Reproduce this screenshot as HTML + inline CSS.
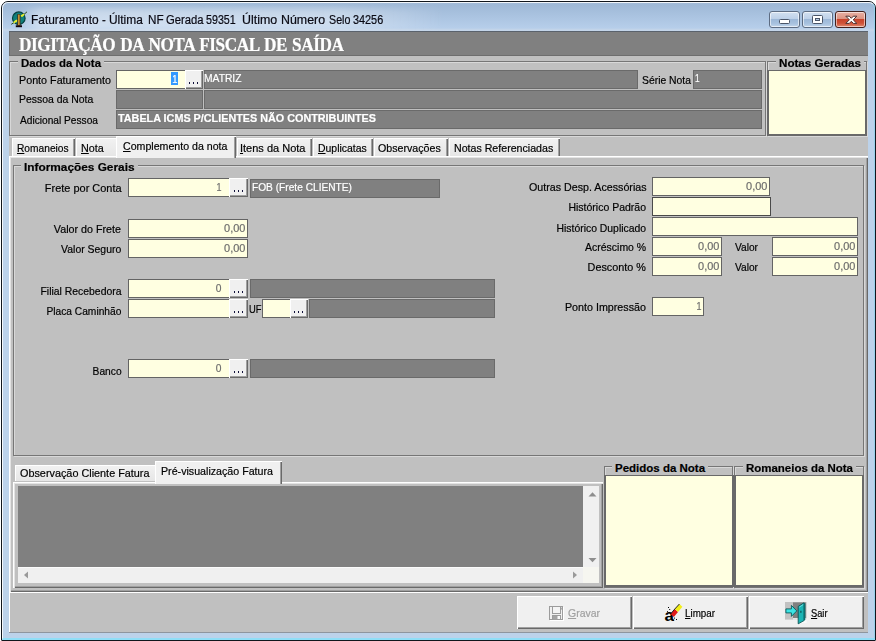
<!DOCTYPE html>
<html lang="pt-BR"><head><meta charset="utf-8"><title>Faturamento</title>
<style>
html,body{margin:0;padding:0}
body{width:876px;height:641px;background:#fff;position:relative;overflow:hidden;font-family:"Liberation Sans",sans-serif;font-size:12px;line-height:14px}
.a{position:absolute;box-sizing:content-box}
.t{position:absolute;white-space:nowrap;line-height:14px;height:14px;-webkit-text-stroke:0.2px currentColor}
.win{left:1px;top:1px;width:873px;height:638px;border:1px solid #11161c;border-radius:7px 7px 1px 1px;
 background:linear-gradient(#a3bcd9 0px,#9fb9d7 3px,#b6ceea 26px,#c6d6e9 28px,#bcd2ea 30px,#bcd2ea 100%)}
.glow{left:20px;top:8px;width:425px;height:22px;background:linear-gradient(90deg,rgba(255,255,255,0) 0,rgba(255,255,255,.40) 5%,rgba(255,255,255,.36) 75%,rgba(255,255,255,0) 100%);filter:blur(3px)}
.win2{left:2px;top:2px;width:871px;height:635px;border:1px solid rgba(255,255,255,.85);border-bottom-width:2px;border-radius:6px 6px 0 0;border-bottom-color:#8fdef7;border-right-color:#98d2ea}
.client{left:9px;top:31px;width:859px;height:601px;background:#c0c0c0}
u{text-decoration:underline;text-underline-offset:1px;text-decoration-thickness:1px}
</style></head>
<body>
<div class="a win"></div>
<div class="a glow"></div>
<div class="a win2"></div>
<div class="a client"></div>
<div class="a " style="left:9px;top:632px;width:859px;height:1px;background:#8e959e"></div>
<svg class="a" style="left:11px;top:11px" width="17" height="17" viewBox="0 0 17 17">
<circle cx="7.8" cy="7.2" r="6.3" fill="#0f7f7b" stroke="#06403f" stroke-width="1.2"/>
<path d="M0.3 13.3 L3 11.6 M13 3.4 L16 0.800" stroke="#2a4a18" stroke-width="1" fill="none"/>
<path d="M2.600 11.800 L6.200 9.200 M10 5.200 L13.200 3.200" stroke="#e4ee30" stroke-width="1.800" fill="none"/>
<path d="M3.600 9.600 l2.200 -0.200 l-0.400 2 z M10.400 4 l2.400 0.200 l-1.400 1.800 z" fill="#e4ee30"/>
<rect x="6.400" y="3.200" width="3" height="11.600" fill="#4a1c08"/>
<rect x="7.300" y="3.600" width="1.200" height="11" fill="#f4c848"/>
<rect x="4.800" y="14.300" width="6.200" height="1.900" fill="#12050a"/>
</svg>
<div class="t" style="left:30.60px;top:8.67px;font-size:0;line-height:22px;height:22px;color:#0a0a14"><span style="display:inline-block;font-size:12.5px;width:71.20px;transform:scaleX(0.9538);transform-origin:0 50%">Faturamento</span> <span style="display:inline-block;font-size:12.5px;width:7.60px;transform:scaleX(0.9109);transform-origin:0 50%">-</span> <span style="display:inline-block;font-size:12.5px;width:38.30px;transform:scaleX(0.9542);transform-origin:0 50%">Última</span> <span style="display:inline-block;font-size:12.5px;width:18.10px;transform:scaleX(0.9357);transform-origin:0 50%">NF</span> <span style="display:inline-block;font-size:12.5px;width:39.80px;transform:scaleX(0.8992);transform-origin:0 50%">Gerada</span> <span style="display:inline-block;font-size:12.5px;width:36.30px;transform:scaleX(0.8543);transform-origin:0 50%">59351</span> <span style="display:inline-block;font-size:12.5px;width:39.00px;transform:scaleX(0.9937);transform-origin:0 50%">Último</span> <span style="display:inline-block;font-size:12.5px;width:47.80px;transform:scaleX(0.9917);transform-origin:0 50%">Número</span> <span style="display:inline-block;font-size:12.5px;width:23.90px;transform:scaleX(0.8549);transform-origin:0 50%">Selo</span> <span style="display:inline-block;font-size:12.5px;width:30.20px;transform:scaleX(0.8687);transform-origin:0 50%">34256</span></div>
<div class="a " style="left:769px;top:11px;width:29px;height:15px;background:linear-gradient(#d2e0f0 0%,#bdd0e8 47%,#9db8d8 50%,#a8c2df 78%,#c4d7ec 100%);border:1px solid #5d6c82;box-shadow:inset 0 0 0 1px rgba(255,255,255,.6);border-radius:3px"></div>
<div class="a " style="left:802px;top:11px;width:29px;height:15px;background:linear-gradient(#d2e0f0 0%,#bdd0e8 47%,#9db8d8 50%,#a8c2df 78%,#c4d7ec 100%);border:1px solid #5d6c82;box-shadow:inset 0 0 0 1px rgba(255,255,255,.6);border-radius:3px"></div>
<div class="a " style="left:835px;top:11px;width:29px;height:15px;background:linear-gradient(#e8b0a4 0%,#dc9483 45%,#c8442c 50%,#cf5238 75%,#e08a70 100%);border:1px solid #43201c;box-shadow:inset 0 0 0 1px rgba(255,255,255,.55);border-radius:3px"></div>
<svg class="a" style="left:769px;top:11px" width="97" height="17" viewBox="0 0 97 17"><rect x="10.500" y="8.500" width="10" height="4" rx="1" fill="#fff" stroke="#4a5568" stroke-width="1"/><rect x="43.500" y="4.500" width="10" height="8" rx="1" fill="#fff" stroke="#4a5568" stroke-width="1"/><rect x="46.500" y="7.500" width="4" height="2" fill="#b6cae3" stroke="#4a5568" stroke-width="1"/><path d="M76.800 5.200 L80.300 5.200 L82.300 7.300 L84.300 5.200 L87.800 5.200 L84.200 8.800 L87.800 12.400 L84.300 12.400 L82.300 10.300 L80.300 12.400 L76.800 12.400 L80.400 8.800 Z" fill="#fff" stroke="#4a3030" stroke-width="1" stroke-linejoin="round"/></svg>
<div class="a " style="left:9px;top:31px;width:859px;height:25px;background:#808080;box-shadow:inset 0 1px 0 #5a626c, inset 1px 0 0 #6c6c6c, inset 0 -1px 0 #6e6e6e"></div>
<span class="t" style="top:33.92px;font-size:18px;color:#fff;line-height:22px;height:22px;font-family:'Liberation Serif', serif;font-weight:bold;left:18.5px;transform-origin:0 50%;transform:scaleX(0.9556);letter-spacing:-0.45px;word-spacing:1.3px;">DIGITAÇÃO DA NOTA FISCAL DE SAÍDA</span>
<div class="a " style="left:10px;top:62px;width:755px;height:73px;border:1px solid #d8d8d8"></div>
<div class="a " style="left:9px;top:61px;width:755px;height:73px;border:1px solid #767676"></div>
<div class="a " style="left:18px;top:57px;width:86px;height:13px;background:#c0c0c0"></div>
<span class="t" style="top:56.02px;font-size:11.5px;color:#000;font-weight:bold;left:21px;transform-origin:0 50%;transform:scaleX(0.9936);">Dados da Nota</span>
<span class="t" style="top:73.02px;font-size:11.5px;color:#000;left:19px;transform-origin:0 50%;transform:scaleX(0.9345);">Ponto Faturamento</span>
<span class="t" style="top:92.02px;font-size:11.5px;color:#000;left:19px;transform-origin:0 50%;transform:scaleX(0.9078);">Pessoa da Nota</span>
<span class="t" style="top:112.52px;font-size:11.5px;color:#000;left:20px;transform-origin:0 50%;transform:scaleX(0.8840);">Adicional Pessoa</span>
<div class="a " style="left:116px;top:70px;width:85px;height:17px;background:#ffffe1;border:1px solid #646464"></div>
<div class="a " style="left:171px;top:72px;width:7px;height:13px;background:#3399ff"></div>
<span class="t" style="top:72.02px;font-size:11.5px;color:#fff;right:698.4px;transform-origin:100% 50%;transform:scaleX(0.8117);">1</span>
<div class="a " style="left:185px;top:70px;width:18px;height:19px;background:#f0f0f0;box-shadow:inset 1px 1px 0 #fff, inset -1px -1px 0 #696969, inset -2px -2px 0 #a0a0a0"></div>
<div class="a " style="left:189px;top:82px;width:1.4px;height:2px;background:#10103a"></div>
<div class="a " style="left:193px;top:82px;width:1.4px;height:2px;background:#10103a"></div>
<div class="a " style="left:197px;top:82px;width:1.4px;height:2px;background:#10103a"></div>
<div class="a " style="left:204px;top:70px;width:432px;height:17px;background:#808080;border:1px solid #6a6a6a"></div>
<span class="t" style="top:71.02px;font-size:11.5px;color:#fff;left:204.3px;transform-origin:0 50%;transform:scaleX(0.8939);">MATRIZ</span>
<span class="t" style="top:72.52px;font-size:11.5px;color:#000;left:642px;transform-origin:0 50%;transform:scaleX(0.9017);">Série Nota</span>
<div class="a " style="left:693px;top:70px;width:67px;height:17px;background:#808080;border:1px solid #6a6a6a"></div>
<span class="t" style="top:71.02px;font-size:11.5px;color:#fff;left:694.8px;transform-origin:0 50%;transform:scaleX(0.7180);">1</span>
<div class="a " style="left:116px;top:90px;width:85px;height:17px;background:#808080;border:1px solid #6a6a6a"></div>
<div class="a " style="left:204px;top:90px;width:556px;height:17px;background:#808080;border:1px solid #6a6a6a"></div>
<div class="a " style="left:116px;top:110px;width:644px;height:17px;background:#808080;border:1px solid #6a6a6a"></div>
<span class="t" style="top:111.02px;font-size:11.5px;color:#fff;font-weight:bold;left:118px;transform-origin:0 50%;transform:scaleX(0.9391);">TABELA ICMS P/CLIENTES NÃO CONTRIBUINTES</span>
<div class="a " style="left:768px;top:62px;width:98px;height:73px;border:1px solid #d8d8d8"></div>
<div class="a " style="left:767px;top:61px;width:98px;height:73px;border:1px solid #767676"></div>
<div class="a " style="left:767px;top:70px;width:96px;height:63px;background:#ffffe1;border:2px solid #696969;border-top-width:1px"></div>
<div class="a " style="left:775.5px;top:57px;width:88px;height:13px;background:#c0c0c0"></div>
<span class="t" style="top:56.02px;font-size:11.5px;color:#000;font-weight:bold;left:778.5px;transform-origin:0 50%;transform:scaleX(1.0100);">Notas Geradas</span>
<div class="a " style="left:9px;top:156px;width:859px;height:436px;background:#c0c0c0;box-shadow:inset 1px 1px 0 #fff, inset 2px 2px 0 #e3e3e3, inset -1px -1px 0 #696969, inset -2px -2px 0 #a0a0a0"></div>
<div class="a " style="left:12px;top:138px;width:63px;height:18px;background:linear-gradient(#f2f2f2,#e6e6e6);box-shadow:inset 1px 1px 0 #fff, inset -1px 0 0 #696969, inset -2px 0 0 #a0a0a0"></div>
<div class="a " style="left:76px;top:138px;width:40px;height:18px;background:linear-gradient(#f2f2f2,#e6e6e6);box-shadow:inset 1px 1px 0 #fff"></div>
<div class="a " style="left:116px;top:136px;width:120px;height:22px;background:#f0f0f0;box-shadow:inset 1px 1px 0 #fff, inset -1px 0 0 #696969, inset -2px 0 0 #a0a0a0"></div>
<div class="a " style="left:237px;top:138px;width:75px;height:18px;background:linear-gradient(#f2f2f2,#e6e6e6);box-shadow:inset 1px 1px 0 #fff, inset -1px 0 0 #696969, inset -2px 0 0 #a0a0a0"></div>
<div class="a " style="left:313px;top:138px;width:60px;height:18px;background:linear-gradient(#f2f2f2,#e6e6e6);box-shadow:inset 1px 1px 0 #fff, inset -1px 0 0 #696969, inset -2px 0 0 #a0a0a0"></div>
<div class="a " style="left:374px;top:138px;width:74px;height:18px;background:linear-gradient(#f2f2f2,#e6e6e6);box-shadow:inset 1px 1px 0 #fff, inset -1px 0 0 #696969, inset -2px 0 0 #a0a0a0"></div>
<div class="a " style="left:449px;top:138px;width:111px;height:18px;background:linear-gradient(#f2f2f2,#e6e6e6);box-shadow:inset 1px 1px 0 #fff, inset -1px 0 0 #696969, inset -2px 0 0 #a0a0a0"></div>
<span class="t" style="top:140.52px;font-size:11.5px;color:#000;left:16.6px;transform-origin:0 50%;transform:scaleX(0.8868);"><u>R</u>omaneios</span>
<span class="t" style="top:140.52px;font-size:11.5px;color:#000;left:80.5px;transform-origin:0 50%;transform:scaleX(0.9378);"><u>N</u>ota</span>
<span class="t" style="top:138.52px;font-size:11.5px;color:#000;left:122.6px;transform-origin:0 50%;transform:scaleX(0.9225);"><u>C</u>omplemento da nota</span>
<span class="t" style="top:140.52px;font-size:11.5px;color:#000;left:240px;transform-origin:0 50%;transform:scaleX(0.9573);"><u>I</u>tens da Nota</span>
<span class="t" style="top:140.52px;font-size:11.5px;color:#000;left:317.6px;transform-origin:0 50%;transform:scaleX(0.9068);"><u>D</u>uplicatas</span>
<span class="t" style="top:140.52px;font-size:11.5px;color:#000;left:378.2px;transform-origin:0 50%;transform:scaleX(0.9267);">Observações</span>
<span class="t" style="top:140.52px;font-size:11.5px;color:#000;left:453.8px;transform-origin:0 50%;transform:scaleX(0.9236);">Notas Referenciadas</span>
<div class="a " style="left:14px;top:166px;width:849px;height:289px;border:1px solid #d8d8d8"></div>
<div class="a " style="left:13px;top:165px;width:849px;height:289px;border:1px solid #767676"></div>
<div class="a " style="left:21.3px;top:161px;width:116.5px;height:13px;background:#c0c0c0"></div>
<span class="t" style="top:160.02px;font-size:11.5px;color:#000;font-weight:bold;left:24.3px;transform-origin:0 50%;transform:scaleX(1.0290);">Informações Gerais</span>
<span class="t" style="top:181.02px;font-size:11.5px;color:#000;right:754.8px;transform-origin:100% 50%;transform:scaleX(0.9522);">Frete por Conta</span>
<div class="a " style="left:128px;top:178px;width:118px;height:17px;background:#ffffe1;border:1px solid #646464"></div>
<div class="a " style="left:229px;top:178px;width:19px;height:19px;background:#f0f0f0;box-shadow:inset 1px 1px 0 #fff, inset -1px -1px 0 #696969, inset -2px -2px 0 #a0a0a0"></div>
<div class="a " style="left:234px;top:190px;width:1.4px;height:2px;background:#10103a"></div>
<div class="a " style="left:238px;top:190px;width:1.4px;height:2px;background:#10103a"></div>
<div class="a " style="left:242px;top:190px;width:1.4px;height:2px;background:#10103a"></div>
<span class="t" style="top:180.02px;font-size:11.5px;color:#6c6c6c;right:654.4px;transform-origin:100% 50%;transform:scaleX(0.7805);">1</span>
<div class="a " style="left:250px;top:179px;width:188px;height:17px;background:#808080;border:1px solid #6a6a6a"></div>
<span class="t" style="top:179.52px;font-size:11.5px;color:#fff;left:251.5px;transform-origin:0 50%;transform:scaleX(0.8841);">FOB (Frete CLIENTE)</span>
<span class="t" style="top:222.02px;font-size:11.5px;color:#000;right:754.8px;transform-origin:100% 50%;transform:scaleX(0.9331);">Valor do Frete</span>
<div class="a " style="left:128px;top:219px;width:118px;height:17px;background:#ffffe1;border:1px solid #646464"></div>
<span class="t" style="top:221.02px;font-size:11.5px;color:#6c6c6c;right:630.5px;transform-origin:100% 50%;transform:scaleX(0.9513);">0,00</span>
<span class="t" style="top:241.52px;font-size:11.5px;color:#000;right:754.8px;transform-origin:100% 50%;transform:scaleX(0.9083);">Valor Seguro</span>
<div class="a " style="left:128px;top:239px;width:118px;height:17px;background:#ffffe1;border:1px solid #646464"></div>
<span class="t" style="top:241.02px;font-size:11.5px;color:#6c6c6c;right:630.5px;transform-origin:100% 50%;transform:scaleX(0.9513);">0,00</span>
<span class="t" style="top:284.02px;font-size:11.5px;color:#000;right:754.8px;transform-origin:100% 50%;transform:scaleX(0.9050);">Filial Recebedora</span>
<div class="a " style="left:128px;top:279px;width:118px;height:17px;background:#ffffe1;border:1px solid #646464"></div>
<div class="a " style="left:229px;top:279px;width:19px;height:19px;background:#f0f0f0;box-shadow:inset 1px 1px 0 #fff, inset -1px -1px 0 #696969, inset -2px -2px 0 #a0a0a0"></div>
<div class="a " style="left:234px;top:291px;width:1.4px;height:2px;background:#10103a"></div>
<div class="a " style="left:238px;top:291px;width:1.4px;height:2px;background:#10103a"></div>
<div class="a " style="left:242px;top:291px;width:1.4px;height:2px;background:#10103a"></div>
<span class="t" style="top:281.02px;font-size:11.5px;color:#6c6c6c;right:654.4px;transform-origin:100% 50%;transform:scaleX(0.8898);">0</span>
<div class="a " style="left:250px;top:279px;width:243px;height:17px;background:#808080;border:1px solid #6a6a6a"></div>
<span class="t" style="top:304.02px;font-size:11.5px;color:#000;right:754.8px;transform-origin:100% 50%;transform:scaleX(0.8887);">Placa Caminhão</span>
<div class="a " style="left:128px;top:299px;width:118px;height:17px;background:#ffffe1;border:1px solid #646464"></div>
<div class="a " style="left:229px;top:299px;width:19px;height:19px;background:#f0f0f0;box-shadow:inset 1px 1px 0 #fff, inset -1px -1px 0 #696969, inset -2px -2px 0 #a0a0a0"></div>
<div class="a " style="left:234px;top:311px;width:1.4px;height:2px;background:#10103a"></div>
<div class="a " style="left:238px;top:311px;width:1.4px;height:2px;background:#10103a"></div>
<div class="a " style="left:242px;top:311px;width:1.4px;height:2px;background:#10103a"></div>
<span class="t" style="top:302.02px;font-size:11.5px;color:#000;left:248.5px;transform-origin:0 50%;transform:scaleX(0.8147);">UF</span>
<div class="a " style="left:262px;top:299px;width:44px;height:17px;background:#ffffe1;border:1px solid #646464"></div>
<div class="a " style="left:290px;top:299px;width:18px;height:19px;background:#f0f0f0;box-shadow:inset 1px 1px 0 #fff, inset -1px -1px 0 #696969, inset -2px -2px 0 #a0a0a0"></div>
<div class="a " style="left:294px;top:311px;width:1.4px;height:2px;background:#10103a"></div>
<div class="a " style="left:298px;top:311px;width:1.4px;height:2px;background:#10103a"></div>
<div class="a " style="left:302px;top:311px;width:1.4px;height:2px;background:#10103a"></div>
<div class="a " style="left:309px;top:299px;width:184px;height:17px;background:#808080;border:1px solid #6a6a6a"></div>
<span class="t" style="top:363.52px;font-size:11.5px;color:#000;right:754.8px;transform-origin:100% 50%;transform:scaleX(0.8893);">Banco</span>
<div class="a " style="left:128px;top:359px;width:118px;height:17px;background:#ffffe1;border:1px solid #646464"></div>
<div class="a " style="left:229px;top:359px;width:19px;height:19px;background:#f0f0f0;box-shadow:inset 1px 1px 0 #fff, inset -1px -1px 0 #696969, inset -2px -2px 0 #a0a0a0"></div>
<div class="a " style="left:234px;top:371px;width:1.4px;height:2px;background:#10103a"></div>
<div class="a " style="left:238px;top:371px;width:1.4px;height:2px;background:#10103a"></div>
<div class="a " style="left:242px;top:371px;width:1.4px;height:2px;background:#10103a"></div>
<span class="t" style="top:361.02px;font-size:11.5px;color:#6c6c6c;right:654.4px;transform-origin:100% 50%;transform:scaleX(0.8898);">0</span>
<div class="a " style="left:250px;top:359px;width:243px;height:17px;background:#808080;border:1px solid #6a6a6a"></div>
<span class="t" style="top:180.02px;font-size:11.5px;color:#000;right:229.7px;transform-origin:100% 50%;transform:scaleX(0.9284);">Outras Desp. Acessórias</span>
<div class="a " style="left:652px;top:177px;width:116px;height:17px;background:#ffffe1;border:1px solid #646464"></div>
<span class="t" style="top:179.02px;font-size:11.5px;color:#6c6c6c;right:108.8px;transform-origin:100% 50%;transform:scaleX(0.9513);">0,00</span>
<span class="t" style="top:200.02px;font-size:11.5px;color:#000;right:229.7px;transform-origin:100% 50%;transform:scaleX(0.9128);">Histórico Padrão</span>
<div class="a " style="left:652px;top:197px;width:117px;height:17px;background:#ffffe1;border:1px solid #4a4a4a"></div>
<span class="t" style="top:220.52px;font-size:11.5px;color:#000;right:229.7px;transform-origin:100% 50%;transform:scaleX(0.9043);">Histórico Duplicado</span>
<div class="a " style="left:652px;top:217px;width:204px;height:17px;background:#ffffe1;border:1px solid #646464"></div>
<span class="t" style="top:240.02px;font-size:11.5px;color:#000;right:229.7px;transform-origin:100% 50%;transform:scaleX(0.9090);">Acréscimo %</span>
<div class="a " style="left:652px;top:237px;width:68px;height:17px;background:#ffffe1;border:1px solid #646464"></div>
<span class="t" style="top:239.02px;font-size:11.5px;color:#6c6c6c;right:156.5px;transform-origin:100% 50%;transform:scaleX(0.9513);">0,00</span>
<span class="t" style="top:240.02px;font-size:11.5px;color:#000;left:735px;transform-origin:0 50%;transform:scaleX(0.8846);">Valor</span>
<div class="a " style="left:772px;top:237px;width:84px;height:17px;background:#ffffe1;border:1px solid #646464"></div>
<span class="t" style="top:239.02px;font-size:11.5px;color:#6c6c6c;right:20.5px;transform-origin:100% 50%;transform:scaleX(0.9513);">0,00</span>
<span class="t" style="top:260.02px;font-size:11.5px;color:#000;right:229.7px;transform-origin:100% 50%;transform:scaleX(0.9417);">Desconto %</span>
<div class="a " style="left:652px;top:257px;width:68px;height:17px;background:#ffffe1;border:1px solid #646464"></div>
<span class="t" style="top:259.02px;font-size:11.5px;color:#6c6c6c;right:156.5px;transform-origin:100% 50%;transform:scaleX(0.9513);">0,00</span>
<span class="t" style="top:260.02px;font-size:11.5px;color:#000;left:735px;transform-origin:0 50%;transform:scaleX(0.8846);">Valor</span>
<div class="a " style="left:772px;top:257px;width:84px;height:17px;background:#ffffe1;border:1px solid #646464"></div>
<span class="t" style="top:259.02px;font-size:11.5px;color:#6c6c6c;right:20.5px;transform-origin:100% 50%;transform:scaleX(0.9513);">0,00</span>
<span class="t" style="top:300.02px;font-size:11.5px;color:#000;right:229.7px;transform-origin:100% 50%;transform:scaleX(0.9317);">Ponto Impressão</span>
<div class="a " style="left:652px;top:297px;width:50px;height:17px;background:#ffffe1;border:1px solid #646464"></div>
<span class="t" style="top:299.02px;font-size:11.5px;color:#6c6c6c;right:174.2px;transform-origin:100% 50%;transform:scaleX(0.7805);">1</span>
<div class="a " style="left:13px;top:482px;width:590px;height:106px;background:#c0c0c0;box-shadow:inset 1px 1px 0 #fff, inset 2px 2px 0 #e3e3e3, inset -1px -1px 0 #696969, inset -2px -2px 0 #a0a0a0"></div>
<div class="a " style="left:15px;top:465px;width:140px;height:16px;background:linear-gradient(#f2f2f2,#e6e6e6);box-shadow:inset 1px 1px 0 #fff"></div>
<div class="a " style="left:155px;top:461px;width:127px;height:23px;background:#f0f0f0;box-shadow:inset 1px 1px 0 #fff, inset -1px 0 0 #696969, inset -2px 0 0 #a0a0a0"></div>
<span class="t" style="top:465.52px;font-size:11.5px;color:#000;left:19.8px;transform-origin:0 50%;transform:scaleX(0.9422);">Observação Cliente Fatura</span>
<span class="t" style="top:464.02px;font-size:11.5px;color:#000;left:161px;transform-origin:0 50%;transform:scaleX(0.9271);">Pré-visualização Fatura</span>
<div class="a " style="left:18px;top:486px;width:581px;height:97px;background:#808080"></div>
<div class="a " style="left:583px;top:486px;width:16px;height:81px;background:#f0f0f0"></div>
<div class="a " style="left:18px;top:567px;width:565px;height:16px;background:#f0f0f0;box-shadow:inset 0 1px 0 #fafafa"></div>
<div class="a " style="left:583px;top:567px;width:16px;height:16px;background:#f6f6f0"></div>
<svg class="a" style="left:583px;top:487px" width="16" height="80"><path d="M5.500 9.500 L9.500 5.300 L13.500 9.500 Z" fill="#8e8e8e"/><path d="M5.500 71 L9.500 75.200 L13.500 71 Z" fill="#8e8e8e"/></svg>
<svg class="a" style="left:18px;top:567px" width="565" height="16"><path d="M10 4.500 L6 8 L10 11.500 Z" fill="#9a9a9a"/><path d="M555 4.500 L559 8 L555 11.500 Z" fill="#9a9a9a"/></svg>
<div class="a " style="left:605px;top:467px;width:127px;height:120px;border:1px solid #d8d8d8"></div>
<div class="a " style="left:604px;top:466px;width:127px;height:120px;border:1px solid #767676"></div>
<div class="a " style="left:604px;top:475px;width:126px;height:109px;background:#ffffe1;border:2px solid #696969;border-top-width:1px"></div>
<div class="a " style="left:612px;top:461.5px;width:96px;height:13px;background:#c0c0c0"></div>
<span class="t" style="top:460.52px;font-size:11.5px;color:#000;font-weight:bold;left:615px;transform-origin:0 50%;">Pedidos da Nota</span>
<div class="a " style="left:735px;top:467px;width:128px;height:120px;border:1px solid #d8d8d8"></div>
<div class="a " style="left:734px;top:466px;width:128px;height:120px;border:1px solid #767676"></div>
<div class="a " style="left:734px;top:475px;width:126px;height:109px;background:#ffffe1;border:2px solid #696969;border-top-width:1px"></div>
<div class="a " style="left:743px;top:461.5px;width:113px;height:13px;background:#c0c0c0"></div>
<span class="t" style="top:460.52px;font-size:11.5px;color:#000;font-weight:bold;left:746px;transform-origin:0 50%;transform:scaleX(0.9967);">Romaneios da Nota</span>
<div class="a " style="left:9px;top:592px;width:859px;height:40px;background:#c0c0c0;box-shadow:inset 1px 1px 0 #fff"></div>
<div class="a " style="left:517px;top:596px;width:115px;height:33px;background:#f0f0f0;box-shadow:inset 1px 1px 0 #fff, inset -1px -1px 0 #696969, inset -2px -2px 0 #a0a0a0"></div>
<div class="a " style="left:633px;top:596px;width:115px;height:33px;background:#f0f0f0;box-shadow:inset 1px 1px 0 #fff, inset -1px -1px 0 #696969, inset -2px -2px 0 #a0a0a0"></div>
<div class="a " style="left:749px;top:596px;width:115px;height:33px;background:#f0f0f0;box-shadow:inset 1px 1px 0 #fff, inset -1px -1px 0 #696969, inset -2px -2px 0 #a0a0a0"></div>
<span class="t" style="top:606.02px;font-size:11.5px;color:#a0a0a0;left:568px;transform-origin:0 50%;transform:scaleX(0.9102);"><u>G</u>ravar</span>
<span class="t" style="top:606.02px;font-size:11.5px;color:#000;left:684.5px;transform-origin:0 50%;transform:scaleX(0.8530);"><u>L</u>impar</span>
<span class="t" style="top:606.02px;font-size:11.5px;color:#000;left:811px;transform-origin:0 50%;transform:scaleX(0.8067);"><u>S</u>air</span>
<svg class="a" style="left:549px;top:606px" width="16" height="16" viewBox="0 0 16 16">
<g fill="none" stroke="#fff"><rect x="1.500" y="1.500" width="13" height="13"/></g>
<rect x="0.500" y="0.500" width="13" height="13" fill="#f0f0f0" stroke="#9c9c9c"/>
<rect x="3.500" y="0.500" width="8" height="7" fill="#f4f4f4" stroke="#9c9c9c"/>
<rect x="3.500" y="9.500" width="8" height="4" fill="#fafafa" stroke="#9c9c9c"/>
<rect x="4" y="10" width="4.500" height="3.500" fill="#a4a4a4"/>
<rect x="11.800" y="1.600" width="1" height="2" fill="#9c9c9c"/>
</svg>
<svg class="a" style="left:664px;top:603px" width="20" height="20" viewBox="0 0 20 20">
<text x="0.600" y="17.600" font-family="'Liberation Sans', sans-serif" font-weight="bold" font-size="17" fill="#000">a</text>
<path d="M6.600 11 L9.800 13.900 L14 8.900 L10.800 6 Z" fill="#e01818"/>
<path d="M10.800 6 L14 8.900 L18.400 3.700 L15.400 1 Z" fill="#f2ee18"/>
<path d="M15.400 1 L10.800 6 L6.600 11" stroke="#101010" stroke-width="0.900" fill="none"/>
<g fill="#000"><rect x="4" y="4" width="1" height="1"/><rect x="5.200" y="6" width="1" height="1"/><rect x="3" y="8.200" width="1" height="1"/><rect x="10" y="14.600" width="1" height="1"/><rect x="12" y="16" width="1" height="1"/><rect x="9" y="16.800" width="1" height="1"/></g>
</svg>
<svg class="a" style="left:785px;top:602px" width="23" height="23" viewBox="0 0 23 23">
<rect x="0" y="0" width="21.600" height="17.600" fill="#c2c2c2"/>
<rect x="8" y="0.400" width="12.800" height="15.800" fill="#808080"/>
<path d="M8 16.200 H21.600 V21 H13 V17.600 H8 Z" fill="#f8f8f8"/>
<path d="M13.200 4.400 L19 0.800 V18.600 L13.200 21.800 Z" fill="#1ab4b4" stroke="#0a5656" stroke-width="0.900" stroke-linejoin="round"/>
<path d="M19 0.800 L20.300 1.600 V18 L19 18.600 Z" fill="#0a6e6e"/>
<path d="M14.200 5.200 L18.200 2.600" stroke="#7fe8e8" stroke-width="0.800"/>
<rect x="15.400" y="8.800" width="1" height="2" fill="#083c3c"/>
<path d="M0.900 6.900 H6.400 V3.400 L11.800 8.900 L6.400 14.400 V10.900 H0.900 Z" fill="#3ce4e4" stroke="#0a5a5a" stroke-width="0.900" stroke-linejoin="round"/>
</svg>
</body></html>
